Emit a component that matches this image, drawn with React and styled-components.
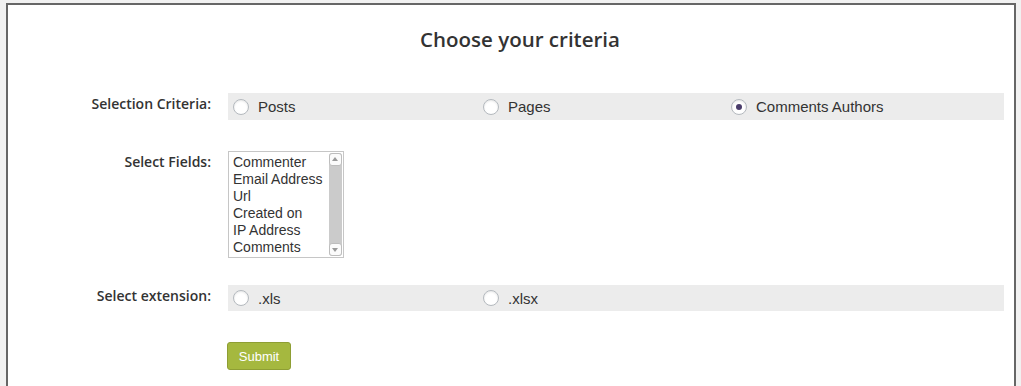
import React from 'react';
import styled, { createGlobalStyle } from 'styled-components';

// Page reset
const GlobalStyle = createGlobalStyle`
  html, body {
    margin: 0;
    padding: 0;
    background: #f1f1f1;
  }
  body {
    font-family: "Open Sans", "Liberation Sans", sans-serif;
    overflow: hidden;
  }
`;

// Styles
const Frame = styled.div`
  margin: 3px 0 0 6px;
  width: 1006px;
  height: 420px;
  border: 2px solid #666;
  border-bottom: none;
  background: #fff;
  padding-top: 1px;
`;

const Title = styled.h2`
  margin: 20px 0 0;
  padding-left: 18px;
  text-align: center;
  font-family: "Open Sans", sans-serif;
  font-weight: 600;
  font-size: 20.5px;
  line-height: 27px;
  color: #333;
`;

const Form = styled.form`
  margin-top: 40px;
  padding-right: 10px;
`;

const Row = styled.div`
  display: grid;
  grid-template-columns: 220px 1fr;
  margin-top: ${p => p.$top || 0}px;
`;

const Label = styled.div`
  text-align: right;
  padding: 1px 17px 0 0;
  font-family: "Open Sans", sans-serif;
  font-weight: 600;
  font-size: 14px;
  line-height: 20px;
  color: #333;
`;

const Band = styled.div`
  display: grid;
  grid-template-columns: 250px 248px 1fr;
  align-items: center;
  height: ${p => p.$h || 27}px;
  padding-left: 5px;
  background: #ececec;
`;

const Option = styled.label`
  display: inline-flex;
  align-items: center;
  gap: 9px;
  font-family: "Liberation Sans", Arial, sans-serif;
  font-size: 15px;
  color: #333;
`;

const Radio = styled.input.attrs({ type: 'radio' })`
  appearance: none;
  -webkit-appearance: none;
  position: relative;
  width: 16px;
  height: 16px;
  margin: 0;
  border: 1px solid #b4b9be;
  border-radius: 50%;
  background: #fff;
  box-shadow: inset 0 1px 2px rgba(0, 0, 0, 0.1);
  box-sizing: border-box;

  &:checked::before {
    content: "";
    position: absolute;
    left: 4px;
    top: 4px;
    width: 6px;
    height: 6px;
    border-radius: 50%;
    background: #4a3d6b;
  }
`;

const ListBox = styled.div`
  display: flex;
  width: 116px;
  height: 107px;
  box-sizing: border-box;
  border: 1px solid #c6c6c6;
  background: #fff;
`;

const Items = styled.ul`
  flex: 1;
  margin: 0;
  padding: 2px 0 0 4px;
  list-style: none;
  font-family: "Liberation Sans", Arial, sans-serif;
  font-size: 14px;
  line-height: 17px;
  color: #333;
  white-space: nowrap;
  overflow: hidden;
`;

const ScrollBar = styled.div`
  display: flex;
  flex-direction: column;
  width: 13px;
  margin: 1px 1px 1px 0;
  background: #cbcbcb;
  border-radius: 3px;
`;

const Track = styled.div`
  flex: 1;
`;

const Arrow = styled.div`
  position: relative;
  height: 13px;
  border: 1px solid #bdbdbd;
  border-radius: 3px;
  background: #fbfbfb;
  box-sizing: border-box;

  &::after {
    content: "";
    position: absolute;
    left: 2px;
    top: ${p => (p.$down ? 4 : 3)}px;
    border-left: 3.5px solid transparent;
    border-right: 3.5px solid transparent;
    ${p => (p.$down ? 'border-top: 4px solid #9a9a9a;' : 'border-bottom: 4px solid #9a9a9a;')}
  }
`;

const Button = styled.button`
  margin-left: -1px;
  width: 64px;
  height: 28px;
  padding: 0;
  border: 1px solid #8e9e34;
  border-radius: 3px;
  background: #a5b83f;
  color: #fff;
  font-family: "Liberation Sans", Arial, sans-serif;
  font-size: 13px;
  cursor: pointer;
`;

const fields = ['Commenter', 'Email Address', 'Url', 'Created on', 'IP Address', 'Comments'];

export default function App() {
  return (
    <>
      <GlobalStyle />
      <Frame>
        <Title>Choose your criteria</Title>
        <Form onSubmit={e => e.preventDefault()}>
          <Row>
            <Label>Selection Criteria:</Label>
            <Band>
              <Option><Radio name="criteria" />Posts</Option>
              <Option><Radio name="criteria" />Pages</Option>
              <Option><Radio name="criteria" defaultChecked />Comments Authors</Option>
            </Band>
          </Row>
          <Row $top={31}>
            <Label>Select Fields:</Label>
            <ListBox>
              <Items>
                {fields.map(f => <li key={f}>{f}</li>)}
              </Items>
              <ScrollBar>
                <Arrow />
                <Track />
                <Arrow $down />
              </ScrollBar>
            </ListBox>
          </Row>
          <Row $top={27}>
            <Label>Select extension:</Label>
            <Band $h={26}>
              <Option><Radio name="ext" />.xls</Option>
              <Option><Radio name="ext" />.xlsx</Option>
            </Band>
          </Row>
          <Row $top={31}>
            <div />
            <div><Button type="submit">Submit</Button></div>
          </Row>
        </Form>
      </Frame>
    </>
  );
}
